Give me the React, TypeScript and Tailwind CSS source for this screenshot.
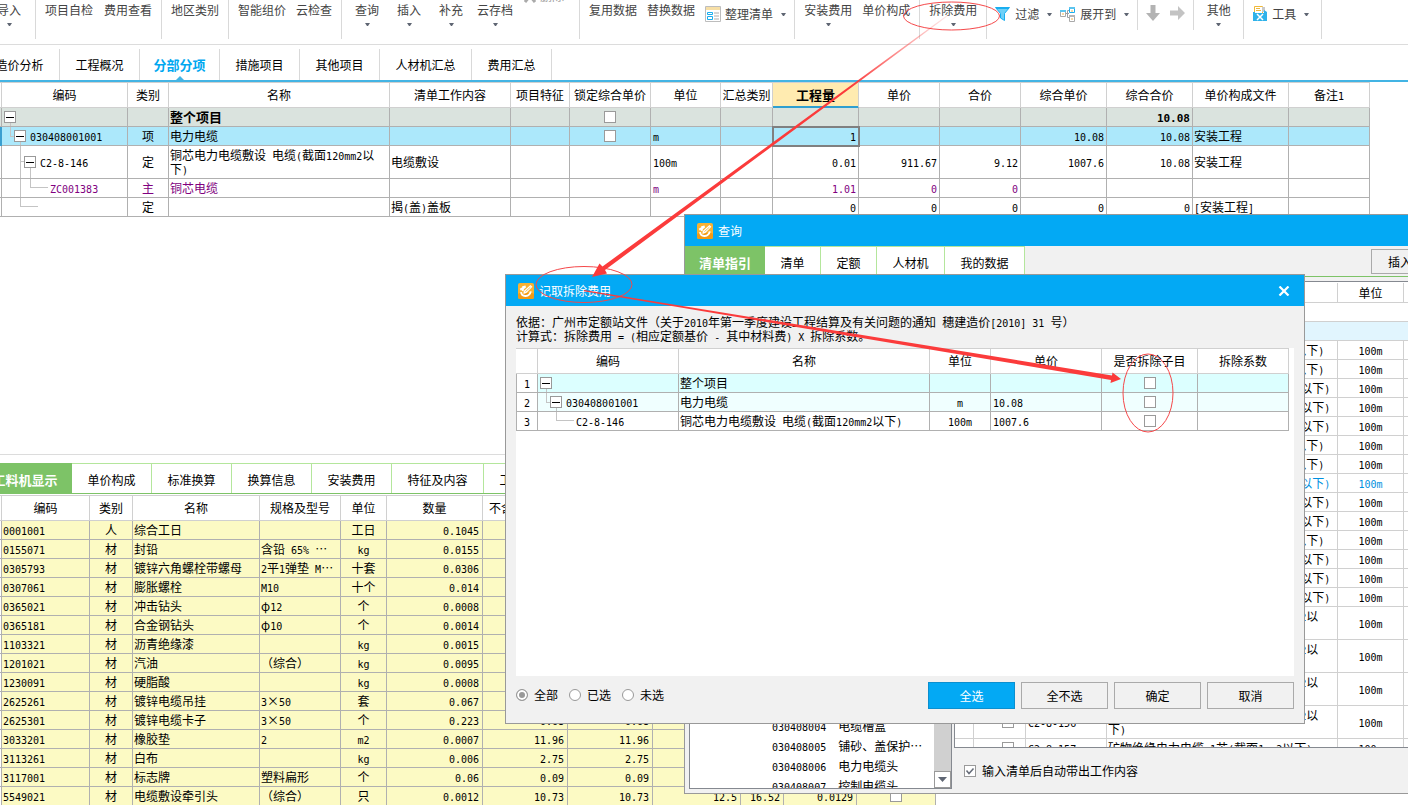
import React from "react";
import clsx from "clsx";

/* ---------- shared pieces ---------- */

function T({ children }: { children: string }) {
  return (
    <>
      {children.split(/([\x20-\x7e]+)/).map((part, i) =>
        i % 2 ? (
          <span key={i} className="font-['DejaVu_Sans_Mono',monospace] text-[10px] leading-none">
            {part}
          </span>
        ) : (
          part
        ),
      )}
    </>
  );
}

function Caret() {
  return (
    <svg width="5" height="3" viewBox="0 0 5 3" className="shrink-0" aria-hidden="true">
      <path d="M0 0h5L3 3H2z" fill="#5f6673" />
    </svg>
  );
}

function Check({ label, checked = false }: { label: string; checked?: boolean }) {
  return (
    <input
      type="checkbox"
      aria-label={label}
      defaultChecked={checked}
      className="block size-3 appearance-none border border-[#9a9a9a] bg-white"
    />
  );
}

function Toggle({ label }: { label: string }) {
  return (
    <button
      type="button"
      aria-label={label}
      className="relative flex size-3 shrink-0 items-center justify-center border border-[#999] bg-white"
    >
      <span className="h-px w-2 bg-black" />
    </button>
  );
}

function Branch({ d, tall = false }: { d: string; tall?: boolean }) {
  return (
    <svg
      width="60"
      height={tall ? 32 : 18}
      className="pointer-events-none absolute left-0 top-0"
      aria-hidden="true"
    >
      <path d={d} fill="none" stroke="#c4c4c4" shapeRendering="crispEdges" />
    </svg>
  );
}

function AppLogo() {
  return (
    <svg width="16" height="16" viewBox="0 0 16 16" className="shrink-0" aria-hidden="true">
      <rect width="16" height="16" rx="2" fill="#f9b233" />
      <rect y="10" width="16" height="6" rx="2" fill="#f39a14" />
      <path
        d="M2.200 6.600 5.200 4.800 4.600 8.200M3 9.200c.4 2.600 2.400 4 4.800 3.800 2.600-.2 4.400-1.800 5-4.600"
        fill="none"
        stroke="#fff"
        strokeWidth="1.900"
      />
      <path d="M4 3.200 7.500 2.500 8 4.500 5.500 6.500z" fill="#fff" />
      <path d="M5.800 8 12.400 2l2 1.800L8.400 10l-3 1z" fill="#fff" />
      <path d="m7.400 8.600 5-4.400" stroke="#f9b233" strokeWidth=".8" />
    </svg>
  );
}

/* ---------- ribbon ---------- */

function Group({
  children,
  className,
  short = false,
}: {
  children: React.ReactNode;
  className?: string;
  short?: boolean;
}) {
  return (
    <div
      className={clsx(
        "flex shrink-0 items-start border-r border-[#d9d9d9]",
        short ? "h-[30px]" : "h-[39px]",
        className,
      )}
    >
      {children}
    </div>
  );
}

function Cmd({ text, menu = false, className }: { text: string; menu?: boolean; className?: string }) {
  return (
    <button
      type="button"
      className={clsx(
        "mt-0.5 flex shrink-0 flex-col items-center whitespace-nowrap leading-4",
        className,
      )}
    >
      {text}
      {menu && (
        <span className="mt-[5px]">
          <Caret />
        </span>
      )}
    </button>
  );
}

function IconCmd({ text, icon }: { text: string; icon: React.ReactNode }) {
  return (
    <button type="button" className="flex h-7 shrink-0 items-center gap-1 whitespace-nowrap">
      {icon}
      {text}
      <span className="ml-1">
        <Caret />
      </span>
    </button>
  );
}

function SheetIcon() {
  return (
    <svg width="16" height="16" viewBox="0 0 16 16" aria-hidden="true">
      <path d="M.5.5h15v15H.5z" fill="#fff" stroke="#bdbdbd" />
      <path d="M1 1h14v3H1z" fill="#f7dfa6" />
      <path d="M2.500 6.500h5v2h-5zM2.500 10.500h5v3h-5z" fill="#fff" stroke="#19aef0" />
      <path d="M9 6h5v2H9zM9 9h5v2H9zM9 12h5v2H9z" fill="#d6d6d6" />
    </svg>
  );
}

function FunnelIcon() {
  return (
    <svg width="16" height="16" viewBox="0 0 16 16" aria-hidden="true">
      <path d="M.5 1.500h14l-5 6v7l-4-2.500v-4.500z" fill="#6fd0f7" stroke="#19aef0" />
      <path d="M1 2h13" stroke="#19aef0" strokeWidth="2" />
    </svg>
  );
}

function ExpandIcon() {
  return (
    <svg width="16" height="16" viewBox="0 0 16 16" aria-hidden="true">
      <path d="M5 7.500h4M7.500 4.500v7H10M7.500 4.500H10" fill="none" stroke="#9aa0a6" />
      <path d="M.5 4.500h5v6h-5z" fill="#fff" stroke="#a9a9a9" />
      <path d="M0 4h6v2H0z" fill="#5cc4ee" />
      <path d="M9.500 1.500h5v5h-5z" fill="#fff" stroke="#19aef0" />
      <path d="M9 1h6v2H9z" fill="#5cc4ee" />
      <path d="M9.500 9.500h5v6h-5z" fill="#fff" stroke="#a9a9a9" />
      <path d="M9 9h6v2H9z" fill="#b5b5b5" />
      <path d="M2 8h2M11 5h2M11 13h2" stroke="#f0b44a" />
    </svg>
  );
}

function ToolsIcon() {
  return (
    <svg width="16" height="16" viewBox="0 0 16 16" aria-hidden="true">
      <path d="M2.500.5h8v8h-8z" fill="#fff" stroke="#f0b93a" />
      <path d="M4 2.500h4M4 4.500h5" stroke="#f0b93a" />
      <path d="M10 1h3v5h-3z" fill="#c9c9c9" />
      <path d="M1 6h2v1h9V4l3 2v9H1z" fill="#2fb2ea" />
      <path d="m5 8 6 6M11 8l-6 6" stroke="#fff" strokeWidth="1.500" />
    </svg>
  );
}

function Ribbon() {
  return (
    <header className="flex h-[45px] shrink-0 items-start border-b border-[#dcdcdc] bg-white text-[#444]">
      <Group className="w-9">
        <Cmd text="导入" menu className="-ml-[3px]" />
      </Group>
      <Group className="gap-[11px] px-[9px]">
        <Cmd text="项目自检" />
        <Cmd text="费用查看" />
      </Group>
      <Group className="px-[9px]">
        <Cmd text="地区类别" />
      </Group>
      <Group className="gap-2.5 px-[9px]">
        <Cmd text="智能组价" />
        <Cmd text="云检查" />
      </Group>
      <Group className="w-[238px] pl-1">
        <Cmd text="查询" menu className="w-[42px]" />
        <Cmd text="插入" menu className="w-[42px]" />
        <Cmd text="补充" menu className="w-[42px]" />
        <Cmd text="云存档" menu className="w-[46px]" />
        <button type="button" className="-mt-3 ml-1.5 flex items-center gap-1 leading-4 text-[#999]">
          <svg width="12" height="14" viewBox="0 0 12 14" aria-hidden="true">
            <path d="m1 13 9-11M11 13 2 2" stroke="#aaa" strokeWidth="3" />
          </svg>
          删除
        </button>
      </Group>
      <Group className="gap-2.5 pl-[9px] pr-2">
        <Cmd text="复用数据" />
        <Cmd text="替换数据" />
        <IconCmd text="整理清单" icon={<SheetIcon />} />
      </Group>
      <Group className="gap-2.5 px-[9px]">
        <Cmd text="安装费用" menu />
        <Cmd text="单价构成" />
      </Group>
      <Group className="px-[9px]">
        <Cmd text="拆除费用" menu />
      </Group>
      <Group className="w-[151px] gap-2 pl-2" short>
        <IconCmd text="过滤" icon={<FunnelIcon />} />
        <IconCmd text="展开到" icon={<ExpandIcon />} />
      </Group>
      <Group className="w-14 gap-2.5 pl-2" short>
        <button type="button" aria-label="下移" className="flex h-[26px] items-center">
          <svg width="14" height="16" viewBox="0 0 14 16" aria-hidden="true">
            <path d="M4.500 0h5v8H14l-7 8-7-8h4.500z" fill="#b3b3b3" />
          </svg>
        </button>
        <button type="button" aria-label="右移" className="flex h-[26px] items-center">
          <svg width="15" height="14" viewBox="0 0 15 14" aria-hidden="true">
            <path d="M0 4.500h8V0l7 7-7 7V9.500H0z" fill="#c3c3c3" />
          </svg>
        </button>
      </Group>
      <Group className="w-[50px] justify-center">
        <Cmd text="其他" menu />
      </Group>
      <Group className="w-[78px] pl-2">
        <IconCmd text="工具" icon={<ToolsIcon />} />
      </Group>
    </header>
  );
}

/* ---------- page tabs ---------- */

const pageTabs = [
  { text: "造价分析", w: "w-20 -ml-[20px]" },
  { text: "工程概况", w: "w-20" },
  { text: "分部分项", w: "w-20", on: true },
  { text: "措施项目", w: "w-20" },
  { text: "其他项目", w: "w-20" },
  { text: "人材机汇总", w: "w-[92px]" },
  { text: "费用汇总", w: "w-20" },
];

function PageTabs() {
  return (
    <nav className="flex h-[37px] shrink-0 items-stretch border-b-2 border-[#43b4e4] bg-white pt-1">
      {pageTabs.map((t) => (
        <button
          type="button"
          key={t.text}
          className={clsx(
            "relative shrink-0 border-r border-[#d9d9d9] leading-8",
            t.w,
            t.on && "text-[13px] font-bold text-[#00a8f0]",
          )}
        >
          {t.text}
          {t.on && (
            <svg width="8" height="4" className="absolute bottom-0 left-9" aria-hidden="true">
              <path d="M4 0l4 4H0z" fill="#43b4e4" />
            </svg>
          )}
        </button>
      ))}
    </nav>
  );
}

/* ---------- main grid ---------- */

const mainCols = [
  { h: "", w: "w-[2px]" },
  { h: "编码", w: "w-[126px]" },
  { h: "类别", w: "w-[41px]" },
  { h: "名称", w: "w-[221px]" },
  { h: "清单工作内容", w: "w-[121px]" },
  { h: "项目特征", w: "w-[59px]" },
  { h: "锁定综合单价", w: "w-[81px]" },
  { h: "单位", w: "w-[70px]" },
  { h: "汇总类别", w: "w-[52px]" },
  { h: "工程量", w: "w-[86px]" },
  { h: "单价", w: "w-[81px]" },
  { h: "合价", w: "w-[81px]" },
  { h: "综合单价", w: "w-[86px]" },
  { h: "综合合价", w: "w-[86px]" },
  { h: "单价构成文件", w: "w-[96px]" },
  { h: "备注1", w: "w-[81px]" },
];

type MainRow = {
  code: string;
  indent: string;
  toggle: boolean;
  branch: string;
  tall?: boolean;
  cls: string;
  kind: string;
  name: string;
  work?: string;
  lock?: boolean;
  unit?: string;
  nums: string[];
  file?: string;
};

const mainRows: MainRow[] = [
  {
    code: "", indent: "pl-0.5", toggle: true, branch: "M8.5 14v4", cls: "h-[19px] bg-[#dae3de]",
    kind: "", name: "整个项目", lock: true, nums: ["", "", "", "", "10.08"],
  },
  {
    code: "030408001001", indent: "pl-3", toggle: true, branch: "M8.5 0v9.5H12M18.5 14v4", cls: "h-[19px] bg-[#ace8fb]",
    kind: "项", name: "电力电缆", lock: true, unit: "m", nums: ["1", "", "", "10.08", "10.08"], file: "安装工程",
  },
  {
    code: "C2-8-146", indent: "pl-[22px]", toggle: true, tall: true, branch: "M18.5 0v32M18.5 15.500H22M28.5 20v12", cls: "h-[33px]",
    kind: "定", name: "铜芯电力电缆敷设 电缆(截面120mm2以下)", work: "电缆敷设", unit: "100m",
    nums: ["0.01", "911.67", "9.12", "1007.6", "10.08"], file: "安装工程",
  },
  {
    code: "ZC001383", indent: "pl-12", toggle: false, branch: "M18.5 0v18M28.5 0v8.500H46", cls: "h-[19px] text-[#800080]",
    kind: "主", name: "铜芯电缆", unit: "m", nums: ["1.01", "0", "0", "", ""],
  },
  {
    code: "", indent: "pl-12", toggle: false, branch: "M18.5 0v8.500H36", cls: "h-[19px]",
    kind: "定", name: "", work: "揭(盖)盖板", nums: ["0", "0", "0", "0", "0"], file: "[安装工程]",
  },
];

const cell = "border-b border-r border-[#b0b0b0] p-0 overflow-hidden";
const head = "border-b border-r border-[#d0d0d0] p-0 font-normal overflow-hidden whitespace-nowrap";

function MainGrid() {
  return (
    <section className="h-[372px] shrink-0 overflow-hidden bg-white">
      <table className="w-[1370px] table-fixed border-separate border-spacing-0 leading-[14px]">
        <colgroup>
          {mainCols.map((c, i) => (
            <col key={i} className={c.w} />
          ))}
        </colgroup>
        <thead>
          <tr className="h-[26px]">
            {mainCols.map((c, i) => (
              <th
                key={i}
                className={clsx(
                  head,
                  "border-t",
                  c.h === "工程量" &&
                    "bg-[#ffebb0] text-[13px] !font-bold shadow-[inset_0_-1px_0_#2f9fd0] !border-b-[#2f9fd0]",
                )}
              >
                <T>{c.h}</T>
              </th>
            ))}
          </tr>
        </thead>
        <tbody>
          {mainRows.map((r, i) => (
            <tr key={i} className={r.cls}>
              <td className={clsx(cell, i === 1 && "bg-[#3a9fd0] !border-[#3a9fd0]")} />
              <td className={clsx(cell, "relative")}>
                <Branch d={r.branch} tall={r.tall} />
                <div className={clsx("flex items-center gap-1", r.indent)}>
                  {r.toggle && <Toggle label="折叠" />}
                  <span>
                    <T>{r.code}</T>
                  </span>
                </div>
              </td>
              <td className={clsx(cell, "text-center")}>{r.kind}</td>
              <td className={clsx(cell, "pl-px", i === 0 && "text-[13px] font-bold")}>
                <T>{r.name}</T>
              </td>
              <td className={clsx(cell, "pl-px")}>
                <T>{r.work ?? ""}</T>
              </td>
              <td className={cell} />
              <td className={cell}>
                {r.lock && (
                  <div className="flex justify-center">
                    <Check label="锁定综合单价" />
                  </div>
                )}
              </td>
              <td className={clsx(cell, "pl-0.5")}>
                <T>{r.unit ?? ""}</T>
              </td>
              <td className={cell} />
              {r.nums.map((n, j) => (
                <td
                  key={j}
                  className={clsx(
                    cell,
                    "pr-0.5 text-right",
                    i === 0 && "font-bold",
                    i === 1 && j === 0 && "outline-2 -outline-offset-1 outline-[#808080]",
                  )}
                >
                  {i === 0 ? (
                    <span className="font-['DejaVu_Sans_Mono',monospace] text-[11px] leading-none">
                      {n}
                    </span>
                  ) : (
                    <T>{n}</T>
                  )}
                </td>
              ))}
              <td className={clsx(cell, "pl-px")}>
                <T>{r.file ?? ""}</T>
              </td>
              <td className={cell} />
            </tr>
          ))}
        </tbody>
      </table>
    </section>
  );
}

/* ---------- resource grid ---------- */

const detailTabs = [
  { text: "工料机显示", w: "w-[94px] -ml-[22px]", on: true },
  { text: "单价构成", w: "w-20" },
  { text: "标准换算", w: "w-20" },
  { text: "换算信息", w: "w-20" },
  { text: "安装费用", w: "w-20" },
  { text: "特征及内容", w: "w-[92px]" },
  { text: "工程量明细", w: "w-[92px]" },
];

const detailCols = [
  { h: "", w: "w-[2px]" },
  { h: "编码", w: "w-[88px]" },
  { h: "类别", w: "w-[43px]" },
  { h: "名称", w: "w-[127px]" },
  { h: "规格及型号", w: "w-[81px]" },
  { h: "单位", w: "w-[46px]" },
  { h: "数量", w: "w-[96px]" },
  { h: "不含税市场价", w: "w-[85px]" },
  { h: "含税市场价", w: "w-[85px]" },
  { h: "税率", w: "w-[88px]" },
  { h: "合价", w: "w-[43px]" },
  { h: "合计数量", w: "w-[73px]" },
  { h: "是否暂估", w: "w-[79px]" },
];

const detailRows: string[][] = [
  ["0001001", "人", "综合工日", "", "工日", "0.1045", "", "", "", "", ""],
  ["0155071", "材", "封铅", "含铅 65% ⋯", "kg", "0.0155", "", "", "", "", ""],
  ["0305793", "材", "镀锌六角螺栓带螺母", "2平1弹垫 M⋯", "十套", "0.0306", "", "", "", "", ""],
  ["0307061", "材", "膨胀螺栓", "M10", "十个", "0.014", "", "", "", "", ""],
  ["0365021", "材", "冲击钻头", "φ12", "个", "0.0008", "", "", "", "", ""],
  ["0365181", "材", "合金钢钻头", "φ10", "个", "0.0014", "", "", "", "", ""],
  ["1103321", "材", "沥青绝缘漆", "", "kg", "0.0015", "", "", "", "", ""],
  ["1201021", "材", "汽油", "（综合）", "kg", "0.0095", "", "", "", "", ""],
  ["1230091", "材", "硬脂酸", "", "kg", "0.0008", "", "", "", "", ""],
  ["2625261", "材", "镀锌电缆吊挂", "3×50", "套", "0.067", "", "", "", "", ""],
  ["2625301", "材", "镀锌电缆卡子", "3×50", "个", "0.223", "0.68", "0.68", "", "", ""],
  ["3033201", "材", "橡胶垫", "2", "m2", "0.0007", "11.96", "11.96", "", "", ""],
  ["3113261", "材", "白布", "", "kg", "0.006", "2.75", "2.75", "", "", ""],
  ["3117001", "材", "标志牌", "塑料扁形", "个", "0.06", "0.09", "0.09", "", "", ""],
  ["5549021", "材", "电缆敷设牵引头", "（综合）", "只", "0.0012", "10.73", "10.73", "12.5", "16.52", "0.0129"],
];

function DetailPane() {
  return (
    <section className="min-h-0 flex-1 overflow-hidden border-t border-[#dcdcdc] bg-white pt-2">
      <nav className="flex h-[31px] border-b border-[#7dc367]">
        {detailTabs.map((t) => (
          <button
            type="button"
            key={t.text}
            className={clsx(
              "shrink-0 whitespace-nowrap border-t leading-[32px]",
              t.w,
              t.on
                ? "border-[#7dc367] bg-[#7dc367] text-[13px] font-bold text-white"
                : "border-r border-[#b4e69c]",
            )}
          >
            {t.text}
          </button>
        ))}
      </nav>
      <table className="mt-px w-[936px] table-fixed border-separate border-spacing-0 leading-[14px]">
        <colgroup>
          {detailCols.map((c, i) => (
            <col key={i} className={c.w} />
          ))}
        </colgroup>
        <thead>
          <tr className="h-[26px]">
            {detailCols.map((c, i) => (
              <th key={i} className={clsx(head, "border-t")}>
                {c.h}
              </th>
            ))}
          </tr>
        </thead>
        <tbody>
          {detailRows.map((r, i) => (
            <tr key={i} className="h-[19px] bg-[#fcfac4]">
              <td className={clsx(cell, "bg-white")} />
              {r.map((v, j) => (
                <td
                  key={j}
                  className={clsx(
                    cell,
                    "whitespace-nowrap",
                    j === 1 || j === 4 ? "text-center" : j > 4 ? "pr-[3px] text-right" : "pl-px",
                  )}
                >
                  <T>{v}</T>
                </td>
              ))}
              <td className={cell}>
                <div className="flex justify-center">
                  <Check label="是否暂估" />
                </div>
              </td>
            </tr>
          ))}
        </tbody>
      </table>
    </section>
  );
}

/* ---------- query window ---------- */

const queryTabs = [
  { text: "清单指引", w: "w-20", on: true },
  { text: "清单", w: "w-14" },
  { text: "定额", w: "w-14" },
  { text: "人材机", w: "w-[68px]" },
  { text: "我的数据", w: "w-20" },
];

const listItems = [
  ["030408004", "电缆槽盒"],
  ["030408005", "铺砂、盖保护⋯"],
  ["030408006", "电力电缆头"],
  ["030408007", "控制电缆头"],
];

type Quota = { code: string; name: string; tall?: boolean; blue?: boolean };

const quotas: Quota[] = [
  { code: "C2-8-139", name: "铜芯电力电缆敷设 电缆(截面10mm2以下)" },
  { code: "C2-8-140", name: "铜芯电力电缆敷设 电缆(截面35mm2以下)" },
  { code: "C2-8-141", name: "铜芯电力电缆敷设 电缆(截面120mm2以下)" },
  { code: "C2-8-142", name: "铜芯电力电缆敷设 电缆(截面240mm2以下)" },
  { code: "C2-8-143", name: "铜芯电力电缆敷设 电缆(截面400mm2以下)" },
  { code: "C2-8-144", name: "铜芯电力电缆敷设 电缆(截面10mm2以下)" },
  { code: "C2-8-145", name: "铜芯电力电缆敷设 电缆(截面35mm2以下)" },
  { code: "C2-8-146", name: "铜芯电力电缆敷设 电缆(截面120mm2以下)", blue: true },
  { code: "C2-8-147", name: "铜芯电力电缆敷设 电缆(截面240mm2以下)" },
  { code: "C2-8-148", name: "铜芯电力电缆敷设 电缆(截面400mm2以下)" },
  { code: "C2-8-149", name: "预制分支电缆敷设 电缆(截面35mm2以下)" },
  { code: "C2-8-150", name: "预制分支电缆敷设 电缆(截面120mm2以下)" },
  { code: "C2-8-151", name: "预制分支电缆敷设 电缆(截面240mm2以下)" },
  { code: "C2-8-152", name: "预制分支电缆敷设 电缆(截面400mm2以下)" },
  { code: "C2-8-153", name: "预制分支电缆敷设 1芯电缆(截面1mm2以下)", tall: true },
  { code: "C2-8-154", name: "预制分支电缆敷设 1芯电缆(截面2mm2以下)", tall: true },
  { code: "C2-8-155", name: "预制分支电缆敷设 1芯电缆(截面4mm2以下)", tall: true },
  { code: "C2-8-156", name: "预制分支电缆敷设 1芯电缆(截面6mm2以下)", tall: true },
  { code: "C2-8-157", name: "矿物绝缘电力电缆 1芯(截面1mm2以下)" },
];

const qcell = "border-b border-r border-[#d0d0d0] p-0 overflow-hidden";

function QueryWindow() {
  return (
    <section
      aria-label="查询"
      className="absolute left-[684px] top-[214px] flex h-[580px] w-[800px] flex-col border border-[#999] bg-[#f1f1f1]"
    >
      <div className="flex h-[31px] shrink-0 items-center gap-[5px] bg-[#03a9f4] pl-3 text-white">
        <AppLogo />
        查询
      </div>
      <div className="flex h-[31px] shrink-0 border-b border-[#7dc367]">
        {queryTabs.map((t) => (
          <button
            type="button"
            key={t.text}
            className={clsx(
              "shrink-0 border-t leading-[32px]",
              t.w,
              t.on
                ? "border-[#7dc367] bg-[#7dc367] text-[13px] font-bold text-white"
                : "border-r border-[#b4e69c] bg-white",
            )}
          >
            {t.text}
          </button>
        ))}
        <button
          type="button"
          className="ml-[346px] mt-[3px] h-[25px] w-[76px] shrink-0 border border-[#aaa] bg-[#f1f1f1]"
        >
          <T>插入(I)</T>
        </button>
      </div>
      <div className="mt-1 flex min-h-0 flex-1">
        <div className="mb-1 ml-1 flex w-[263px] shrink-0 border border-[#858990] bg-white">
          <ul className="flex min-w-0 flex-1 flex-col justify-end overflow-hidden">
            {listItems.map(([code, name]) => (
              <li
                key={code}
                className="flex h-5 shrink-0 gap-3 whitespace-nowrap pl-[82px] leading-5 last:-mb-2"
              >
                <span>
                  <T>{code}</T>
                </span>
                <span>{name}</span>
              </li>
            ))}
          </ul>
          <div className="flex w-[17px] shrink-0 flex-col justify-end bg-[#d0d0d0]">
            <button
              type="button"
              aria-label="向下滚动"
              className="flex h-[17px] items-center justify-center border border-[#999] bg-white"
            >
              <svg width="9" height="5" aria-hidden="true">
                <path d="M0 0h9L4.500 5z" fill="#5f6673" />
              </svg>
            </button>
          </div>
        </div>
        <div className="ml-0.5 flex min-w-0 flex-1 flex-col">
          <div className="h-[467px] shrink-0 overflow-hidden border border-[#858990] bg-white">
            <table className="mt-px w-[530px] table-fixed border-separate border-spacing-0 leading-[14px]">
              <colgroup>
                <col className="w-[19px]" />
                <col className="w-[52px]" />
                <col className="w-[81px]" />
                <col className="w-[231px]" />
                <col className="w-[66px]" />
                <col />
              </colgroup>
              <thead>
                <tr className="h-5">
                  <th className={qcell} />
                  <th className={qcell} />
                  <th className={clsx(qcell, "font-normal")}>编码</th>
                  <th className={clsx(qcell, "font-normal")}>名称</th>
                  <th className={clsx(qcell, "font-normal")}>单位</th>
                  <th className={clsx(qcell, "font-normal")}>单价</th>
                </tr>
              </thead>
              <tbody>
                <tr className="h-[19px]">
                  <td colSpan={6} className={qcell} />
                </tr>
                <tr className="h-[19px] bg-[#e1f5fe]">
                  <td colSpan={6} className={qcell} />
                </tr>
                {quotas.map((q) => (
                  <tr
                    key={q.code}
                    className={clsx(q.tall ? "h-[33px]" : "h-[19px]", q.blue && "text-[#0090e0]")}
                  >
                    <td className={qcell} />
                    <td className={qcell}>
                      <div className="flex justify-end pr-[11px]">
                        <Check label={q.code} />
                      </div>
                    </td>
                    <td className={clsx(qcell, "pl-0.5")}>
                      <T>{q.code}</T>
                    </td>
                    <td className={clsx(qcell, "pl-px", q.tall ? "pr-1" : "whitespace-nowrap")}>
                      <T>{q.name}</T>
                    </td>
                    <td className={clsx(qcell, "text-center")}>
                      <T>100m</T>
                    </td>
                    <td className={qcell} />
                  </tr>
                ))}
              </tbody>
            </table>
          </div>
          <label className="ml-2.5 flex flex-1 items-center gap-1.5">
            <span className="relative">
              <Check label="输入清单后自动带出工作内容" checked />
              <svg
                width="12"
                height="12"
                viewBox="0 0 12 12"
                className="pointer-events-none absolute left-0 top-0"
                aria-hidden="true"
              >
                <path d="m2.500 5.500 2.500 3 4.500-5" fill="none" stroke="#666c78" strokeWidth="1.500" />
              </svg>
            </span>
            输入清单后自动带出工作内容
          </label>
        </div>
      </div>
    </section>
  );
}

/* ---------- fee dialog ---------- */

const feeCols = [
  { h: "", w: "w-[22px]" },
  { h: "编码", w: "w-[141px]" },
  { h: "名称", w: "w-[251px]" },
  { h: "单位", w: "w-[61px]" },
  { h: "单价", w: "w-[111px]" },
  { h: "是否拆除子目", w: "w-[96px]" },
  { h: "拆除系数", w: "w-[91px]" },
];

const feeRows = [
  { code: "", indent: "pl-0.5", toggle: true, branch: "M8.5 14v4", bg: "bg-[#dcffff]", name: "整个项目", unit: "", price: "" },
  { code: "030408001001", indent: "pl-3", toggle: true, branch: "M8.5 0v9.5H12M18.5 14v4", bg: "bg-[#f0ffff]", name: "电力电缆", unit: "m", price: "10.08" },
  { code: "C2-8-146", indent: "pl-[38px]", toggle: false, branch: "M18.5 0v8.500H36", bg: "bg-white", name: "铜芯电力电缆敷设 电缆(截面120mm2以下)", unit: "100m", price: "1007.6" },
];

const feeButtons = ["全选", "全不选", "确定", "取消"];

function FeeDialog() {
  return (
    <section
      role="dialog"
      aria-label="记取拆除费用"
      className="absolute left-[505px] top-[274px] flex h-[450px] w-[800px] flex-col border border-[#999] bg-[#f1f1f1]"
    >
      <div className="flex h-[31px] shrink-0 items-center gap-[5px] bg-[#03a9f4] pl-3 pr-3.5 text-white">
        <AppLogo />
        <span className="flex-1">记取拆除费用</span>
        <button type="button" aria-label="关闭">
          <svg width="12" height="10" viewBox="0 0 12 10" aria-hidden="true">
            <path d="m1.500.5 9 9M10.500.5l-9 9" stroke="#fff" strokeWidth="2.200" />
          </svg>
        </button>
      </div>
      <div className="flex min-h-0 flex-1 flex-col px-2.5 pt-[9px]">
        <p className="leading-[14px]">
          <T>依据：广州市定额站文件（关于2010年第一季度建设工程结算及有关问题的通知 穗建造价[2010] 31 号）</T>
        </p>
        <p className="leading-[14px]">
          <T>计算式：拆除费用 = (相应定额基价 - 其中材料费) X 拆除系数。</T>
        </p>
        <div className="mt-[5px] h-[328px] shrink-0 bg-white">
          <table className="w-[773px] table-fixed border-separate border-spacing-0 leading-[14px]">
            <colgroup>
              {feeCols.map((c, i) => (
                <col key={i} className={c.w} />
              ))}
            </colgroup>
            <thead>
              <tr className="h-[26px]">
                {feeCols.map((c, i) => (
                  <th key={i} className={clsx(head, "border-t")}>
                    {c.h}
                  </th>
                ))}
              </tr>
            </thead>
            <tbody>
              {feeRows.map((r, i) => (
                <tr key={i} className={clsx("h-[19px]", r.bg)}>
                  <td className={clsx(cell, "border-l bg-white text-center")}>
                    <T>{String(i + 1)}</T>
                  </td>
                  <td className={clsx(cell, "relative")}>
                    <Branch d={r.branch} />
                    <div className={clsx("flex items-center gap-1", r.indent)}>
                      {r.toggle && <Toggle label="折叠" />}
                      <span>
                        <T>{r.code}</T>
                      </span>
                    </div>
                  </td>
                  <td className={clsx(cell, "whitespace-nowrap pl-px")}>
                    <T>{r.name}</T>
                  </td>
                  <td className={clsx(cell, "text-center")}>
                    <T>{r.unit}</T>
                  </td>
                  <td className={clsx(cell, "pl-0.5")}>
                    <T>{r.price}</T>
                  </td>
                  <td className={cell}>
                    <div className="flex justify-center">
                      <Check label="是否拆除子目" />
                    </div>
                  </td>
                  <td className={cell} />
                </tr>
              ))}
            </tbody>
          </table>
        </div>
        <div className="flex items-start pt-1.5">
          <div className="flex flex-1 gap-[11px]">
            {["全部", "已选", "未选"].map((t, i) => (
              <label key={t} className="flex h-[26px] items-center gap-1.5">
                <input
                  type="radio"
                  name="scope"
                  defaultChecked={i === 0}
                  className="size-3 appearance-none rounded-full border border-[#999] bg-white checked:bg-[#999] checked:shadow-[inset_0_0_0_2px_#fff]"
                />
                {t}
              </label>
            ))}
          </div>
          <div className="flex gap-1.5">
            {feeButtons.map((t, i) => (
              <button
                type="button"
                key={t}
                className={clsx(
                  "h-[27px] w-[87px] border",
                  i === 0 ? "border-[#0b8fcf] bg-[#03a9f4] text-white" : "border-[#aaa] bg-[#f1f1f1]",
                )}
              >
                {t}
              </button>
            ))}
          </div>
        </div>
      </div>
    </section>
  );
}

/* ---------- red mark-up ---------- */

function Markup() {
  return (
    <svg className="pointer-events-none absolute left-0 top-0 h-full w-full" aria-hidden="true">
      <defs>
        <linearGradient id="fade" gradientUnits="userSpaceOnUse" x1="948" y1="15" x2="850" y2="88">
          <stop offset="0" stopColor="#fb3b3b" stopOpacity="0.1" />
          <stop offset="1" stopColor="#fb3b3b" />
        </linearGradient>
      </defs>
      <g fill="none" stroke="#f5484a">
        <ellipse cx="951.5" cy="16" rx="48" ry="14" />
        <ellipse cx="584" cy="284.500" rx="48" ry="18" />
        <ellipse cx="1148" cy="393" rx="25" ry="39" />
      </g>
      <path d="M948 14.500 948.500 15.500 605 270 607 273.500 592 277 599.500 263.500 602.500 266.500z" fill="url(#fade)" />
      <path d="M584 290 584 291.200 1111 380 1110.500 383 1121 379 1112.500 372.500 1112 375.500z" fill="#fb3b3b" />
    </svg>
  );
}

export default function App() {
  return (
    <div
      lang="zh-CN"
      className="relative flex h-screen w-full flex-col overflow-hidden bg-white font-['Noto_Sans_CJK_SC',sans-serif] text-xs text-black"
    >
      <Ribbon />
      <PageTabs />
      <MainGrid />
      <DetailPane />
      <QueryWindow />
      <FeeDialog />
      <Markup />
    </div>
  );
}
